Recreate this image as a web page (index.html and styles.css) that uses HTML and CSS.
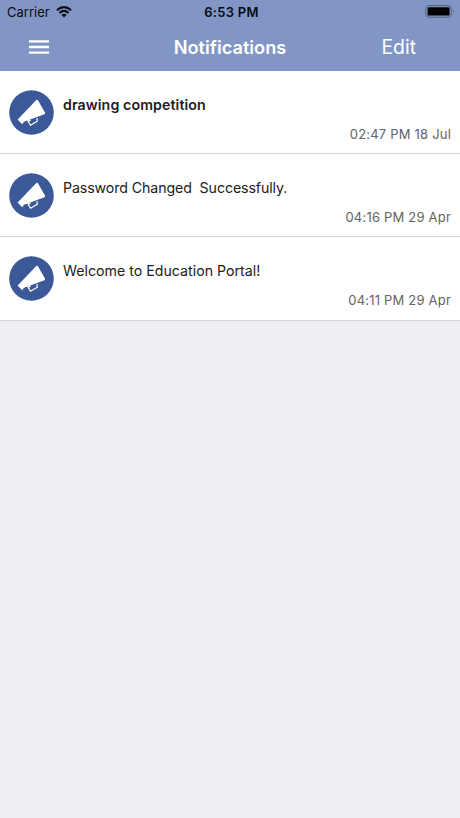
FILE: index.html
```
<!DOCTYPE html>
<html lang="en">
<head>
<meta charset="utf-8">
<title>Notifications</title>
<link rel="stylesheet" href="styles.css">
</head>
<body>
<svg class="symbols" aria-hidden="true">
  <symbol id="megaphone" viewBox="0 0 45 45">
    <circle cx="22.5" cy="22.5" r="22.3" fill="#3b5998"/>
    <path d="M27.3 10 Q28.3 9.2 29 10.2L36.1 22.7Q36.2 24 34.8 24.6L15 31.8 13.1 34.2 8.6 29.6 10.6 27.6Z" fill="#fff"/>
    <path d="M19 30 19.2 31.4 21.5 35.2 28.3 31.2 28 28M19.4 31.2 21.7 30" fill="none" stroke="#fff" stroke-width="1.2" stroke-linejoin="round"/>
  </symbol>
</svg>
<header class="header">
  <div class="status">
    <div class="carrier">
      <span>Carrier</span>
      <svg class="wifi" viewBox="0 0 16 12"><g fill="none" stroke="#080c13" stroke-width="2.1"><path d="M.9 4.3Q8-2 15.1 4.3"/><path d="M3.4 7Q8 2.8 12.6 7"/></g><path d="M5.3 8.8Q8 6.8 10.7 8.8L8 11.4Z" fill="#080c13"/></svg>
    </div>
    <span class="clock">6:53 PM</span>
    <svg class="battery" viewBox="0 0 30 13"><rect x=".8" y=".6" width="25.6" height="11.6" rx="3" fill="none" stroke="#53617d"/><rect x="2.6" y="2.2" width="22" height="8.4" rx="1.2" fill="#000"/><path d="M28 4.5q1.7 1.9 0 3.8z" fill="#53617d"/></svg>
  </div>
  <nav class="nav">
    <svg class="menu" viewBox="0 0 20 14"><path d="M0 1.3h20M0 7h20M0 12.7h20" stroke="#fff" stroke-width="2.3"/></svg>
    <h1 class="title">Notifications</h1>
    <span class="edit">Edit</span>
  </nav>
</header>
<main class="list">
  <article class="row unread">
    <svg class="avatar"><use href="#megaphone"/></svg>
    <div class="body"><p class="message">drawing competition</p><time class="time">02:47 PM 18 Jul</time></div>
  </article>
  <article class="row">
    <svg class="avatar"><use href="#megaphone"/></svg>
    <div class="body"><p class="message condensed">Password Changed&nbsp; Successfully.</p><time class="time">04:16 PM 29 Apr</time></div>
  </article>
  <article class="row">
    <svg class="avatar"><use href="#megaphone"/></svg>
    <div class="body"><p class="message">Welcome to Education Portal!</p><time class="time">04:11 PM 29 Apr</time></div>
  </article>
</main>
</body>
</html>
```
FILE: styles.css
```
* { box-sizing: border-box; }
body { margin: 0; min-height: 818px; background: #efeef3; color: #202020; font-family: Inter, "Liberation Sans", sans-serif; }
.symbols { display: block; width: 0; height: 0; }
.header { height: 71px; background: #8196c4; }
.status { height: 24px; display: grid; grid-template-columns: 1fr auto 1fr; align-items: center; padding: 0 5px 0 7px; font-size: 13px; line-height: 24px; color: #080c13; }
.carrier { display: flex; align-items: center; gap: 6px; }
.wifi { width: 16px; height: 12px; }
.clock { font-weight: 600; letter-spacing: .3px; margin-left: 1px; }
.battery { width: 30px; height: 13px; justify-self: end; margin-top: -1px; }
.nav { height: 46px; display: grid; grid-template-columns: 1fr auto 1fr; align-items: center; padding: 0 29px; color: #fff; }
.menu { width: 20px; height: 14px; }
.title { margin: 0; font-size: 18.2px; line-height: 24px; font-weight: 600; }
.edit { justify-self: end; margin-right: 15px; font-size: 19.4px; line-height: 24px; }
.list { background: #fff; }
.row { display: flex; gap: 9px; height: 83.2px; padding: 19px 9px 0; border-bottom: 1px solid #d5d5d7; }
.avatar { width: 45px; height: 45px; flex: none; }
.body { flex: 1; display: flex; flex-direction: column; }
.message { margin: 5px 0 8.6px; font-size: 14.2px; line-height: 20px; white-space: nowrap; }
.condensed { letter-spacing: -.1px; }
.unread .message { font-weight: 600; letter-spacing: .1px; }
.time { align-self: flex-end; color: #636363; font-size: 13px; line-height: 20px; letter-spacing: .2px; }
```
